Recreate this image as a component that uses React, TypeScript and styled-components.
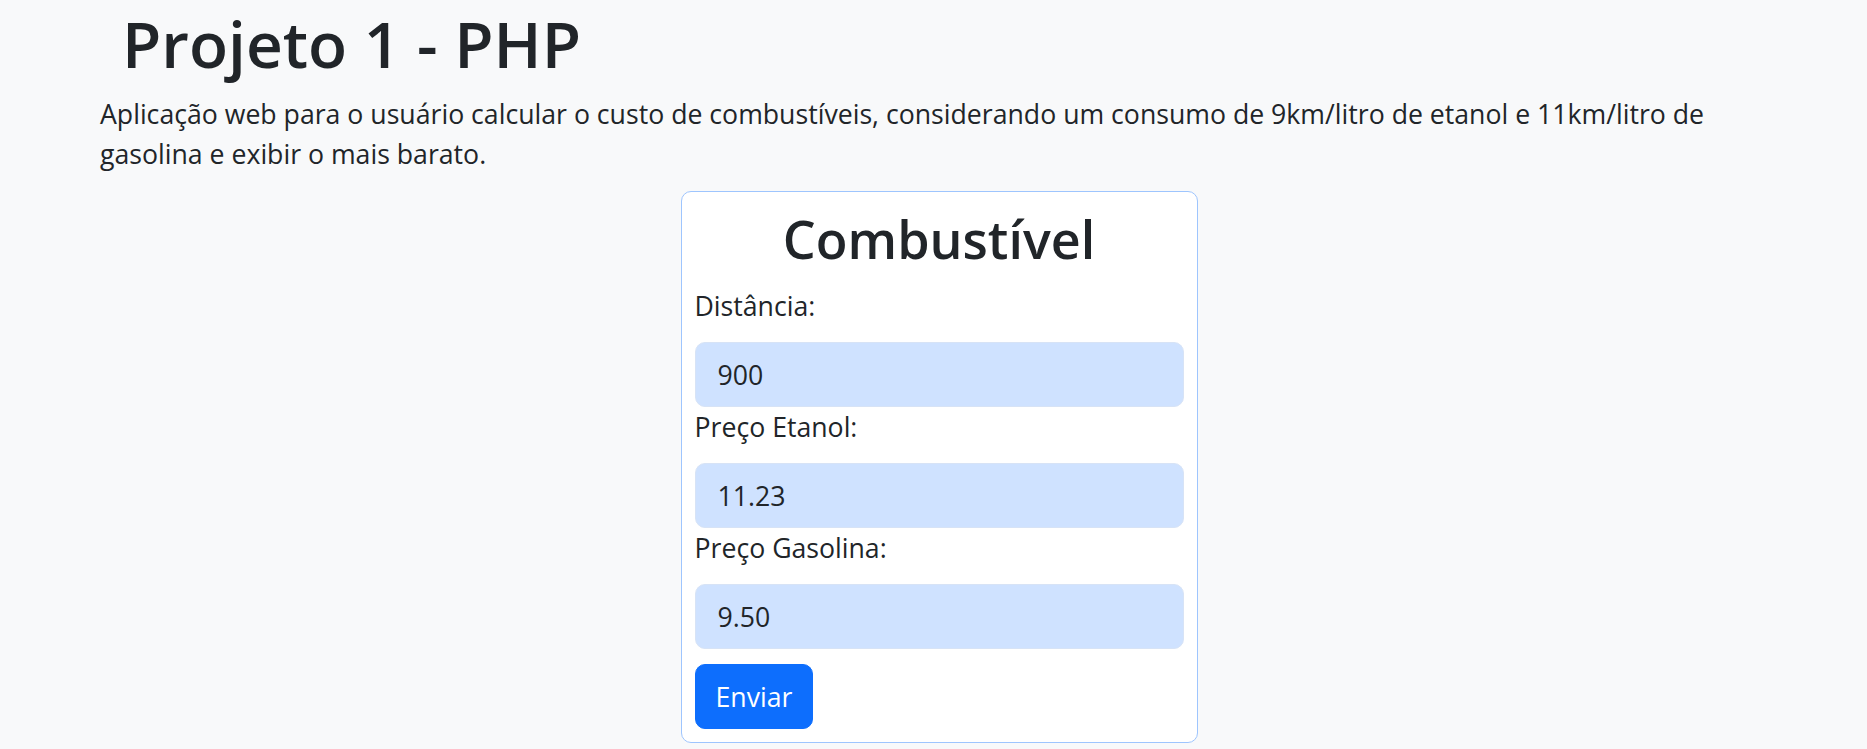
import React from 'react';
import styled, { createGlobalStyle } from 'styled-components';

const GlobalStyle = createGlobalStyle`
    body {
        margin: 0;
        background: #f8f9fa;
        color: #212529;
        font-family: 'Open Sans', 'Noto Sans', sans-serif;
        font-size: 26.67px;
        line-height: 40px;
    }
    * {
        box-sizing: border-box;
    }
`;

const Page = styled.main`
    padding: 0 89px 0 100px;
`;

const Title = styled.h1`
    margin: 0 0 7px;
    padding-left: 22px;
    font-size: 64px;
    font-weight: 600;
    line-height: 87px;
`;

const Intro = styled.p`
    margin: 0;
`;

const Card = styled.form`
    width: 517px;
    margin: 17px auto 0;
    padding: 13px;
    background: #fff;
    border: 1px solid #9ec5fe;
    border-radius: 10px;
`;

const CardTitle = styled.h2`
    margin: 0 0 13px;
    text-align: center;
    font-size: 52px;
    font-weight: 600;
    line-height: 68px;
`;

const Label = styled.label`
    display: block;
    margin-bottom: 16px;
`;

const Input = styled.input`
    display: block;
    width: 100%;
    height: 65px;
    padding: 0 22px;
    font: inherit;
    color: #212529;
    background: #cfe2ff;
    border: 1px solid #d7e3f6;
    border-radius: 10px;
    outline: none;
`;

const Button = styled.button`
    display: block;
    height: 65px;
    margin-top: 15px;
    padding: 0 20px;
    font: inherit;
    color: #fff;
    background: #0d6efd;
    border: 1px solid #0d6efd;
    border-radius: 10px;
`;

const fields = [
    { id: 'distancia', label: 'Distância:', value: '900' },
    { id: 'etanol', label: 'Preço Etanol:', value: '11.23' },
    { id: 'gasolina', label: 'Preço Gasolina:', value: '9.50' },
];

const App = () => (
    <Page>
        <GlobalStyle />
        <Title>Projeto 1 - PHP</Title>
        <Intro>
            Aplicação web para o usuário calcular o custo de combustíveis, considerando um consumo de 9km/litro de etanol e
            11km/litro de gasolina e exibir o mais barato.
        </Intro>
        <Card onSubmit={(e) => e.preventDefault()}>
            <CardTitle>Combustível</CardTitle>
            {fields.map((f) => (
                <React.Fragment key={f.id}>
                    <Label htmlFor={f.id}>{f.label}</Label>
                    <Input id={f.id} defaultValue={f.value} />
                </React.Fragment>
            ))}
            <Button type="submit">Enviar</Button>
        </Card>
    </Page>
);

export default App;
